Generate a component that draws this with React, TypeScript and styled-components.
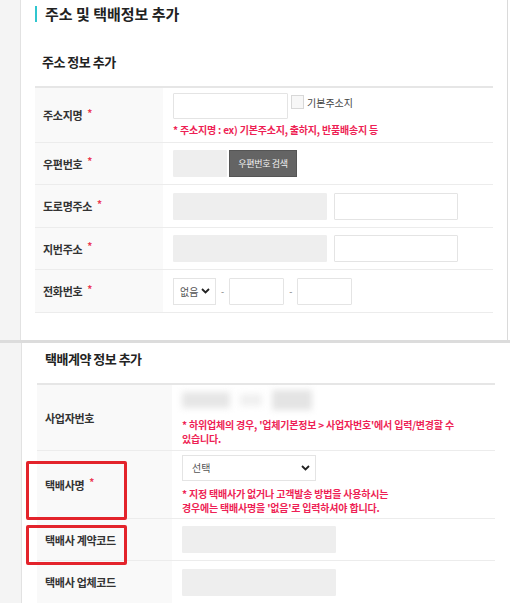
import React from 'react';
import styled, { createGlobalStyle } from 'styled-components';

const GlobalStyle = createGlobalStyle`
  html, body {
    margin: 0;
    padding: 0;
    background: #ffffff;
  }
  body {
    font-family: 'Noto Sans CJK KR', 'Noto Sans', sans-serif;
    color: #333;
  }
`;

const Page = styled.div`
  width: 510px;
  height: 603px;
  overflow: hidden;
  display: flex;
  flex-direction: column;
`;

const Shot = styled.div<{ $gutter: number; $height: number; $divider?: boolean }>`
  display: flex;
  height: ${(p) => p.$height}px;
  flex-shrink: 0;
  border-bottom: ${(p) => (p.$divider ? '3px solid #dcdcdc' : 'none')};
  box-sizing: border-box;

  & > aside {
    width: ${(p) => p.$gutter}px;
    background: #f4f4f4;
    border-right: 1px solid #e2e2e2;
    flex-shrink: 0;
  }
`;

const Panel = styled.div<{ $edge?: boolean }>`
  flex: 1;
  background: #fff;
  border-right: ${(p) => (p.$edge ? '1px solid #dadada' : 'none')};
  margin-right: ${(p) => (p.$edge ? '2px' : '0')};
  display: flex;
  flex-direction: column;
`;

const PageTitle = styled.h1`
  margin: 5px 0 0 14px;
  display: flex;
  align-items: center;
  gap: 8px;
  font-size: 15px;
  font-weight: 700;
  color: #222;
  line-height: 18px;

  &::before {
    content: '';
    width: 2px;
    height: 16px;
    background: #30c6cf;
  }
`;

const SectionTitle = styled.h2<{ $top: number; $left: number }>`
  margin: ${(p) => p.$top}px 0 0 ${(p) => p.$left}px;
  font-size: 13px;
  font-weight: 700;
  color: #222;
  line-height: 18px;
  letter-spacing: -0.5px;
`;

const Table = styled.div<{ $top: number; $left: number; $width: number; $label: number }>`
  margin: ${(p) => p.$top}px 0 0 ${(p) => p.$left}px;
  width: ${(p) => p.$width}px;
  border-top: 2px solid #e6e6e6;
  display: grid;
  grid-template-columns: ${(p) => p.$label}px 1fr;
`;

const Label = styled.div<{ $h: number }>`
  position: relative;
  height: ${(p) => p.$h}px;
  background: #f9f9f9;
  border-bottom: 1px solid #ececec;
  display: flex;
  align-items: center;
  padding-left: 8px;
  font-size: 11px;
  font-weight: 700;
  color: #333;
  letter-spacing: -0.3px;
`;

const Req = styled.span`
  color: #ec3a55;
  margin-left: 5px;
  font-size: 10px;
  position: relative;
  top: -3px;
`;

const Mark = styled.div<{ $top: number; $h: number }>`
  position: absolute;
  z-index: 2;
  left: -11px;
  top: ${(p) => p.$top}px;
  width: 95px;
  height: ${(p) => p.$h}px;
  border: 3px solid #e3232b;
  border-radius: 2px;
`;

const Value = styled.div<{ $h: number; $pad: number }>`
  height: ${(p) => p.$h}px;
  border-bottom: 1px solid #ececec;
  padding-left: ${(p) => p.$pad}px;
  display: flex;
  flex-direction: column;
  justify-content: center;
  gap: 4px;
`;

const Line = styled.div`
  display: flex;
  align-items: center;
  gap: 7px;
`;

const Field = styled.div<{ $w: number; $gray?: boolean; $h?: number }>`
  width: ${(p) => p.$w}px;
  height: ${(p) => p.$h ?? 27}px;
  box-sizing: border-box;
  background: ${(p) => (p.$gray ? '#eeeeee' : '#fff')};
  border: 1px solid ${(p) => (p.$gray ? '#eeeeee' : '#e4e4e4')};
  border-radius: 1px;
`;

const Check = styled.label`
  display: flex;
  align-items: flex-start;
  align-self: flex-start;
  gap: 3px;
  margin-top: 2px;
  margin-left: -4px;
  font-size: 10px;
  color: #444;

  &::before {
    content: '';
    width: 11px;
    height: 12px;
    border: 1px solid #d8d8d8;
    background: #f7f7f7;
  }
`;

const Note = styled.p`
  margin: 0;
  color: #ee1f55;
  font-size: 10px;
  font-weight: 700;
  line-height: 14px;
  letter-spacing: -0.2px;
`;

const DarkButton = styled.button`
  height: 27px;
  width: 68px;
  padding: 0;
  background: #646464;
  border: 1px solid #555;
  color: #f2f2f2;
  font-family: inherit;
  font-size: 9px;
  letter-spacing: -0.3px;
`;

const SelectBox = styled.div<{ $w: number; $h?: number }>`
  width: ${(p) => p.$w}px;
  height: ${(p) => p.$h ?? 27}px;
  box-sizing: border-box;
  border: 1px solid #e4e4e4;
  background: #fff;
  display: flex;
  align-items: center;
  justify-content: space-between;
  padding: 0 5px 0 6px;
  font-size: 10px;
  color: #555;
  white-space: nowrap;
`;

const Dash = styled.span`
  font-size: 9px;
  color: #777;
  margin: 0 -2px;
`;

const Blur = styled.div<{ $w: number; $h: number; $tone: string }>`
  width: ${(p) => p.$w}px;
  height: ${(p) => p.$h}px;
  background: ${(p) => p.$tone};
  filter: blur(3px);
`;

const BlurRow = styled.div`
  display: flex;
  align-items: center;
  gap: 10px;
  margin-bottom: 4px;
`;

const Chevron = () => (
  <svg width="9" height="6" viewBox="0 0 9 6">
    <path d="M1 1l3.5 3.5L8 1" fill="none" stroke="#222" strokeWidth="1.8" />
  </svg>
);

const App: React.FC = () => (
  <Page>
    <GlobalStyle />
    <Shot $gutter={20} $height={343} $divider>
      <aside />
      <Panel $edge>
        <PageTitle>주소 및 택배정보 추가</PageTitle>
        <SectionTitle $top={30} $left={21}>주소 정보 추가</SectionTitle>
        <Table $top={15} $left={14} $width={458} $label={128}>
          <Label $h={54}>
            주소지명<Req>*</Req>
          </Label>
          <Value $h={54} $pad={10}>
            <Line>
              <Field $w={115} $h={26} />
              <Check>기본주소지</Check>
            </Line>
            <Note>* 주소지명 : ex) 기본주소지, 출하지, 반품배송지 등</Note>
          </Value>

          <Label $h={41}>
            우편번호<Req>*</Req>
          </Label>
          <Value $h={41} $pad={10}>
            <Line style={{ gap: 2 }}>
              <Field $w={54} $gray />
              <DarkButton>우편번호 검색</DarkButton>
            </Line>
          </Value>

          <Label $h={42}>
            도로명주소<Req>*</Req>
          </Label>
          <Value $h={42} $pad={10}>
            <Line>
              <Field $w={154} $gray />
              <Field $w={124} />
            </Line>
          </Value>

          <Label $h={41}>
            지번주소<Req>*</Req>
          </Label>
          <Value $h={41} $pad={10}>
            <Line>
              <Field $w={154} $gray />
              <Field $w={124} />
            </Line>
          </Value>

          <Label $h={42}>
            전화번호<Req>*</Req>
          </Label>
          <Value $h={42} $pad={10}>
            <Line>
              <SelectBox $w={43}>
                없음
                <Chevron />
              </SelectBox>
              <Dash>-</Dash>
              <Field $w={55} />
              <Dash>-</Dash>
              <Field $w={55} />
            </Line>
          </Value>
        </Table>
      </Panel>
    </Shot>

    <Shot $gutter={21} $height={260}>
      <aside />
      <Panel>
        <SectionTitle $top={7} $left={23}>택배계약 정보 추가</SectionTitle>
        <Table $top={15} $left={15} $width={458} $label={135}>
          <Label $h={65}>사업자번호</Label>
          <Value $h={65} $pad={10}>
            <BlurRow>
              <Blur $w={48} $h={16} $tone="#e6e6e6" />
              <Blur $w={22} $h={12} $tone="#f0f0f0" />
              <Blur $w={40} $h={20} $tone="#e4e4e4" />
            </BlurRow>
            <Note>
              * 하위업체의 경우, '업체기본정보 &gt; 사업자번호'에서 입력/변경할 수
              <br />
              있습니다.
            </Note>
          </Value>

          <Label $h={67}>
            택배사명<Req>*</Req>
            <Mark $top={10} $h={53} />
          </Label>
          <Value $h={67} $pad={10}>
            <SelectBox $w={134} $h={26} style={{ marginBottom: 2, paddingLeft: 9 }}>
              선택
              <Chevron />
            </SelectBox>
            <Note>
              * 지정 택배사가 없거나 고객발송 방법을 사용하시는
              <br />
              경우에는 택배사명을 '없음'로 입력하셔야 합니다.
            </Note>
          </Value>

          <Label $h={41}>
            택배사 계약코드
            <Mark $top={6} $h={34} />
          </Label>
          <Value $h={41} $pad={10}>
            <Field $w={154} $gray />
          </Value>

          <Label $h={42}>택배사 업체코드</Label>
          <Value $h={42} $pad={10}>
            <Field $w={154} $gray />
          </Value>
        </Table>
      </Panel>
    </Shot>
  </Page>
);

export default App;
